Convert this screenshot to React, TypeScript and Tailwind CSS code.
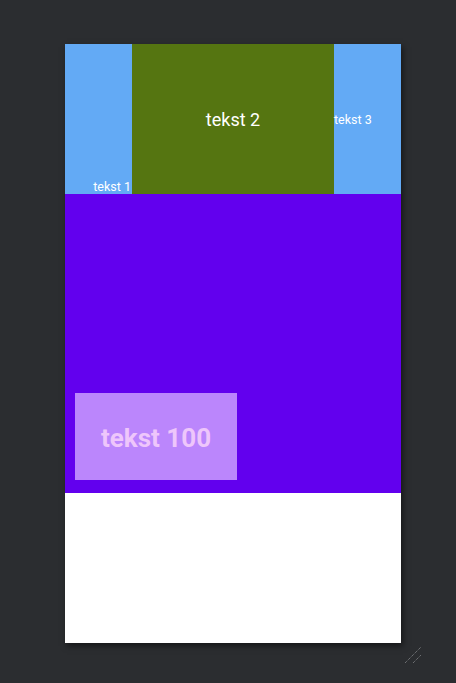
export default function App() {
  return (
    <div
      className="relative h-[683px] w-[456px] overflow-hidden bg-[#2b2d30] pl-[65px] pt-[44px]"
      style={{ fontFamily: 'Roboto, "Noto Sans", sans-serif' }}
    >
      <div className="flex w-[336px] flex-col shadow-[2px_3px_6px_rgba(0,0,0,0.5)]">
        <div className="flex h-[150px] bg-[#63aaf5]">
          <div className="flex w-[67px] items-end justify-end">
            <span className="pr-[1px] text-[12.5px] leading-[15px] text-white">tekst 1</span>
          </div>
          <div className="flex w-[202px] items-center justify-center bg-[#557511] pt-[2px]">
            <span className="text-[18px] leading-[22px] text-white">tekst 2</span>
          </div>
          <div className="flex flex-1 items-center">
            <span className="text-[12.5px] leading-[15px] text-white">tekst 3</span>
          </div>
        </div>
        <div className="flex h-[299px] items-end bg-[#6200ee] pb-[13px] pl-[10px]">
          <div className="flex h-[87px] w-[162px] items-center justify-center bg-[#bb86fc] pt-[2px]">
            <span className="text-[26px] font-bold leading-[30px] text-[#eec6fb]">tekst 100</span>
          </div>
        </div>
        <div className="h-[150px] bg-white" />
      </div>
      <svg
        className="absolute left-[403px] top-[646px]"
        width="20"
        height="20"
        viewBox="0 0 20 20"
      >
        <line x1="2" y1="17" x2="18" y2="1" stroke="#8a8c8f" strokeWidth="1" strokeDasharray="1 1" />
        <line x1="10" y1="17" x2="18" y2="9" stroke="#8a8c8f" strokeWidth="1" strokeDasharray="1 1" />
      </svg>
    </div>
  );
}
